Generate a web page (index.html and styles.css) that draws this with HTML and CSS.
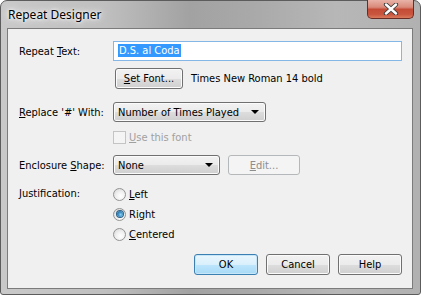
FILE: index.html
```html
<!DOCTYPE html>
<html lang="en">
<head>
  <meta charset="UTF-8">
  <title>Repeat Designer</title>
  <link rel="stylesheet" href="styles.css">
</head>
<body>

  <div class="window">
    <div class="titlebar">
      <span class="title">Repeat Designer</span>
      <div class="close">
        <svg width="16" height="12" viewBox="0 0 16 12">
          <path d="M3 1.5 L13 10.5 M13 1.5 L3 10.5" stroke="#3a3a3a" stroke-width="4.2" stroke-linecap="round"/>
          <path d="M3 1.5 L13 10.5 M13 1.5 L3 10.5" stroke="#fff" stroke-width="2.4" stroke-linecap="round"/>
        </svg>
      </div>
    </div>

    <div class="client">
      <div class="row row-text">
        <label class="label">Repeat <u>T</u>ext:</label>
        <div class="text-input"><span class="sel">D.S. al Coda</span></div>
      </div>

      <div class="row row-font">
        <button class="btn btn-font"><u>S</u>et Font...</button>
        <span class="font-name">Times New Roman 14 bold</span>
      </div>

      <div class="row row-replace">
        <label class="label"><u>R</u>eplace '#' With:</label>
        <div class="combo combo-wide">Number of Times Played<span class="arrow"></span></div>
      </div>

      <div class="row row-check">
        <span class="checkbox"></span>
        <span class="disabled-text"><u>U</u>se this font</span>
      </div>

      <div class="row row-shape">
        <label class="label">Enclosure <u>S</u>hape:</label>
        <div class="combo combo-short">None<span class="arrow"></span></div>
        <button class="btn btn-edit" disabled><u>E</u>dit...</button>
      </div>

      <div class="row row-just">
        <label class="label"><u>J</u>ustification:</label>
        <div class="radios">
          <div class="radio"><span class="dot"></span><u>L</u>eft</div>
          <div class="radio"><span class="dot checked"></span>Ri<u>g</u>ht</div>
          <div class="radio"><span class="dot"></span><u>C</u>entered</div>
        </div>
      </div>

      <div class="actions">
        <button class="btn btn-default">OK</button>
        <button class="btn">Cancel</button>
        <button class="btn">Help</button>
      </div>
    </div>
  </div>

</body>
</html>
```

FILE: styles.css
```css
body {
  margin: 0;
  font-family: "DejaVu Sans Condensed", "DejaVu Sans", sans-serif;
  font-stretch: condensed;
  font-size: 11px;
  color: #000;
  background: #fff;
}

.window {
  width: 421px;
  height: 295px;
  box-sizing: border-box;
  border: 1px solid #5c5c5c;
  border-radius: 7px 7px 3px 3px;
  background: linear-gradient(90deg, #c9c9c9 0%, #bfbfbf 25%, #a2a2a2 45%, #a9a9a9 60%, #b7b7b7 80%, #b1b1b1 100%);
  padding: 0 7px 5px 6px;
  display: flex;
  flex-direction: column;
}

.titlebar {
  height: 27px;
  display: flex;
  justify-content: space-between;
  align-items: flex-start;
}

.title {
  font-family: "Noto Sans", sans-serif;
  font-stretch: normal;
  font-size: 12px;
  line-height: 16px;
  padding: 6px 0 0 1px;
  text-shadow: 0 0 6px #fff, 0 0 3px #fff, 0 0 10px #e8e8e8;
}

.close {
  width: 47px;
  height: 19px;
  box-sizing: border-box;
  margin-right: -1px;
  margin-top: -1px;
  border: 1px solid #6a2d25;
  border-top: none;
  border-radius: 0 0 5px 5px;
  background: linear-gradient(#e9b3a8 0%, #d98a7a 40%, #c44c36 52%, #c9563f 80%, #d97a5d 100%);
  display: flex;
  align-items: center;
  justify-content: center;
}

.client {
  flex: 1;
  background: #f0f0f0;
  border: 1px solid #7b7b7b;
  padding: 12px 10px 0 11px;
}

.row {
  display: flex;
  align-items: center;
}

.label {
  width: 94px;
  flex: none;
}

u {
  text-underline-offset: 1px;
}

.row-text {
  height: 20px;
}

.text-input {
  width: 290px;
  height: 20px;
  box-sizing: border-box;
  border: 1px solid #84b6e6;
  background: #fff;
  padding: 1px 0 0 4px;
  line-height: 15px;
}

.sel {
  background: #3399ff;
  color: #fff;
  padding: 0 1px;
}

.row-font {
  margin-top: 7px;
  padding-left: 96px;
}

.btn {
  font-family: inherit;
  font-stretch: condensed;
  font-size: 11px;
  color: #000;
  height: 21px;
  box-sizing: border-box;
  border: 1px solid #707070;
  border-radius: 3px;
  background: linear-gradient(#f2f2f2 0%, #ebebeb 50%, #dddddd 51%, #cfcfcf 100%);
  box-shadow: inset 0 0 0 1px #fbfbfb;
  padding: 0;
}

.btn-font {
  width: 68px;
}

.font-name {
  margin-left: 8px;
}

.row-replace {
  margin-top: 13px;
}

.combo {
  height: 20px;
  box-sizing: border-box;
  border: 1px solid #707070;
  border-radius: 3px;
  background: linear-gradient(#f2f2f2 0%, #ebebeb 50%, #dddddd 51%, #cfcfcf 100%);
  box-shadow: inset 0 0 0 1px #fbfbfb;
  display: flex;
  align-items: center;
  justify-content: space-between;
  padding: 0 6px 0 4px;
}

.combo-wide {
  width: 153px;
}

.combo-short {
  width: 107px;
}

.arrow {
  width: 0;
  height: 0;
  border-left: 4px solid transparent;
  border-right: 4px solid transparent;
  border-top: 4px solid #000;
}

.row-check {
  margin-top: 9px;
  height: 13px;
  padding-left: 94px;
}

.checkbox {
  width: 13px;
  height: 13px;
  box-sizing: border-box;
  border: 1px solid #c4c4c4;
  background: #f4f4f4;
  margin-right: 3px;
}

.disabled-text {
  color: #a0a0a0;
}

.row-shape {
  margin-top: 11px;
}

.btn-edit {
  width: 72px;
  height: 20px;
  margin-left: 8px;
  color: #8d8d8d;
  border-color: #b5b8ba;
  background: #f4f4f4;
  box-shadow: none;
}

.row-just {
  margin-top: 9px;
  align-items: flex-start;
}

.row-just .label {
  line-height: 20px;
}

.radios {
  display: flex;
  flex-direction: column;
}

.radio {
  height: 20px;
  display: flex;
  align-items: center;
}

.dot {
  width: 13px;
  height: 13px;
  box-sizing: border-box;
  border: 1px solid #939393;
  border-radius: 50%;
  background: radial-gradient(circle at 60% 65%, #ffffff 0%, #f2f2f2 40%, #d4d4d4 100%);
  margin-right: 3px;
  display: flex;
  align-items: center;
  justify-content: center;
}

.dot.checked::after {
  content: "";
  width: 6px;
  height: 6px;
  border-radius: 50%;
  background: radial-gradient(circle at 60% 60%, #8fd2f5 0%, #3b8fc4 45%, #1c4f7a 100%);
  box-shadow: 0 0 0 1px #2c5f86;
}

.actions {
  margin-top: 10px;
  display: flex;
  justify-content: flex-end;
  gap: 8px;
}

.actions .btn {
  width: 64px;
}

.btn-default {
  border-color: #3c7fb1;
  background: linear-gradient(#eaf6fd 0%, #d9f0fc 50%, #bee6fd 51%, #a7d9f5 100%);
  box-shadow: inset 0 0 0 1px #c7e6f8;
}
```
